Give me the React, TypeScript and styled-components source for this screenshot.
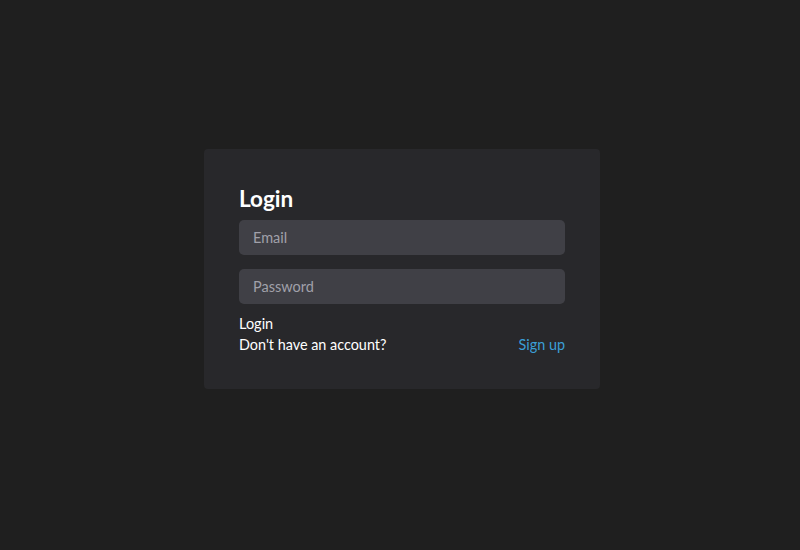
import React from "react";
import styled, { createGlobalStyle } from "styled-components";

const Global = createGlobalStyle`
  html, body { margin: 0; padding: 0; background: #1f1f1f; }
  body { font-family: "Segoe UI", Lato, "Noto Sans", sans-serif; color: #fff; }
  * { box-sizing: border-box; }
`;

const Page = styled.div`
  width: 800px;
  height: 550px;
  display: flex;
  align-items: center;
  justify-content: center;
  background: #1f1f1f;
`;

const Card = styled.form`
  width: 396px;
  height: 240px;
  margin-top: -12px;
  margin-left: 4px;
  padding: 35px 35px 0 35px;
  background: #28282b;
  border-radius: 4px;
  display: flex;
  flex-direction: column;
`;

const Title = styled.h1`
  margin: 0 0 7px 0;
  font-size: 22.5px;
  font-weight: 700;
  line-height: 29px;
  color: #fff;
`;

const Input = styled.input`
  height: 35px;
  width: 100%;
  border: none;
  outline: none;
  border-radius: 5px;
  background: #404046;
  color: #fff;
  padding: 0 14px;
  font-family: inherit;
  font-size: 14.5px;
  margin-bottom: 14px;
  &::placeholder { color: #a1a1aa; }
`;

const Button = styled.button`
  align-self: flex-start;
  background: none;
  border: none;
  padding: 0;
  margin-top: -4px;
  color: #fff;
  font-family: inherit;
  font-size: 14.5px;
  line-height: 20px;
  cursor: pointer;
`;

const Row = styled.div`
  display: flex;
  justify-content: space-between;
  align-items: center;
  font-size: 14.4px;
  line-height: 22px;
`;

const Link = styled.a`
  color: #3b9fd6;
  text-decoration: none;
`;

export default function App() {
  return (
    <>
      <Global />
      <Page>
        <Card onSubmit={(e) => e.preventDefault()}>
          <Title>Login</Title>
          <Input type="email" placeholder="Email" />
          <Input type="password" placeholder="Password" />
          <Button type="submit">Login</Button>
          <Row>
            <span>Don't have an account?</span>
            <Link href="#">Sign up</Link>
          </Row>
        </Card>
      </Page>
    </>
  );
}
